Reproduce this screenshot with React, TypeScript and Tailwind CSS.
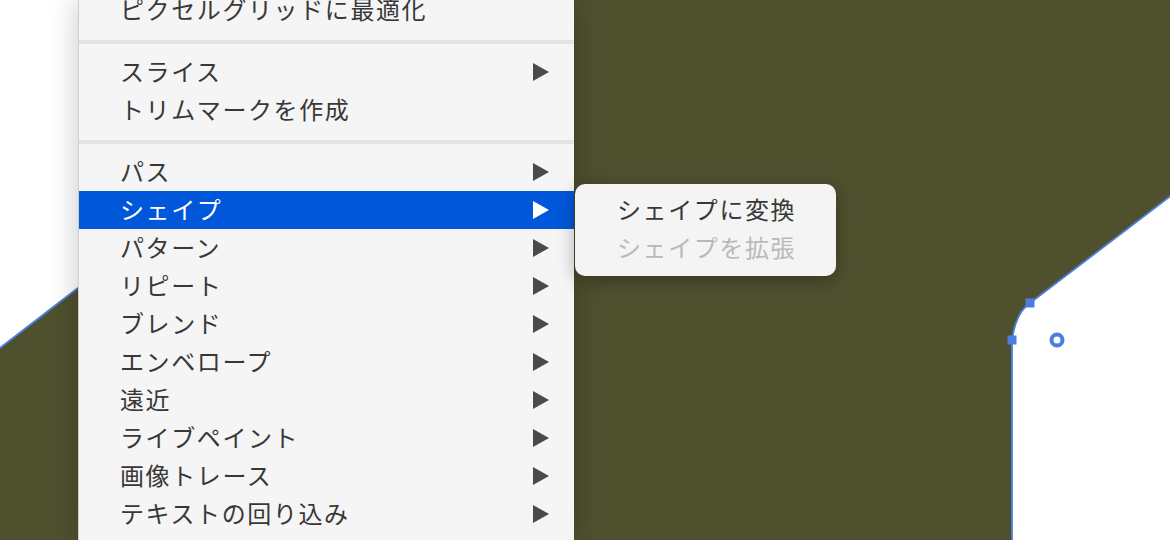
import React from "react";

const font = { fontFamily: '"Noto Sans CJK JP", "Noto Sans", sans-serif' };

function Arrow({ white }: { white?: boolean }) {
  return (
    <svg width="18" height="20" viewBox="0 0 18 20" className="shrink-0">
      <polygon points="1,1 17,10 1,19" fill={white ? "#ffffff" : "#4a4a4a"} />
    </svg>
  );
}

function Row({ label, arrow, active }: { label: string; arrow?: boolean; active?: boolean }) {
  return (
    <div
      className={
        "flex h-[38px] items-center justify-between pl-[41px] pr-[24px] text-[24px] tracking-[1.6px] " +
        (active ? "bg-[#0157d9] text-white" : "text-[#383838]")
      }
    >
      <span className="mb-[3px] leading-none">{label}</span>
      {arrow && <Arrow white={active} />}
    </div>
  );
}

function Sep() {
  return <div className="mt-[11px] mb-[9px] h-[4px] bg-[#e3e3e3]" />;
}

export default function App() {
  return (
    <div className="relative h-[540px] w-[1170px] overflow-hidden bg-[#4f502e]" style={font}>
      <svg className="absolute inset-0" width="1170" height="540" viewBox="0 0 1170 540">
        <polygon points="0,0 460,0 78,288 0,348" fill="#ffffff" />
        <line x1="0" y1="348" x2="460" y2="-6" stroke="#4a7fe0" strokeWidth="1.8" />
        <path
          d="M1012,545 L1012,340 Q1016,312 1030,303 L1210,166 L1210,545 Z"
          fill="#ffffff"
          stroke="#4a7fe0"
          strokeWidth="1.8"
        />
        <rect x="1025.5" y="298.5" width="9" height="9" fill="#4a7fe0" />
        <rect x="1007.5" y="335.5" width="9" height="9" fill="#4a7fe0" />
        <circle cx="1057" cy="340" r="5.5" fill="none" stroke="#4a7fe0" strokeWidth="4" />
      </svg>

      <div className="absolute left-[78px] top-0 h-[540px] w-[496px] border-l border-[#cfcfcf] bg-[#f5f5f5] shadow-[0_0_28px_rgba(0,0,0,0.22)]">
        <div className="mt-[-9px] flex flex-col">
          <Row label="ピクセルグリッドに最適化" />
          <Sep />
          <Row label="スライス" arrow />
          <Row label="トリムマークを作成" />
          <Sep />
          <Row label="パス" arrow />
          <Row label="シェイプ" arrow active />
          <Row label="パターン" arrow />
          <Row label="リピート" arrow />
          <Row label="ブレンド" arrow />
          <Row label="エンベロープ" arrow />
          <Row label="遠近" arrow />
          <Row label="ライブペイント" arrow />
          <Row label="画像トレース" arrow />
          <Row label="テキストの回り込み" arrow />
        </div>
      </div>

      <div className="absolute left-[575px] top-[184px] flex w-[261px] flex-col rounded-[10px] bg-[#f4f4f4] pt-[7px] pb-[9px] shadow-[0_4px_18px_rgba(0,0,0,0.3)]">
        <div className="flex h-[38px] items-center pl-[42px] text-[24px] tracking-[1.6px] text-[#383838]">
          <span className="mb-[3px] leading-none">シェイプに変換</span>
        </div>
        <div className="flex h-[38px] items-center pl-[42px] text-[24px] tracking-[1.6px] text-[#b9b9b9]">
          <span className="mb-[3px] leading-none">シェイプを拡張</span>
        </div>
      </div>
    </div>
  );
}
